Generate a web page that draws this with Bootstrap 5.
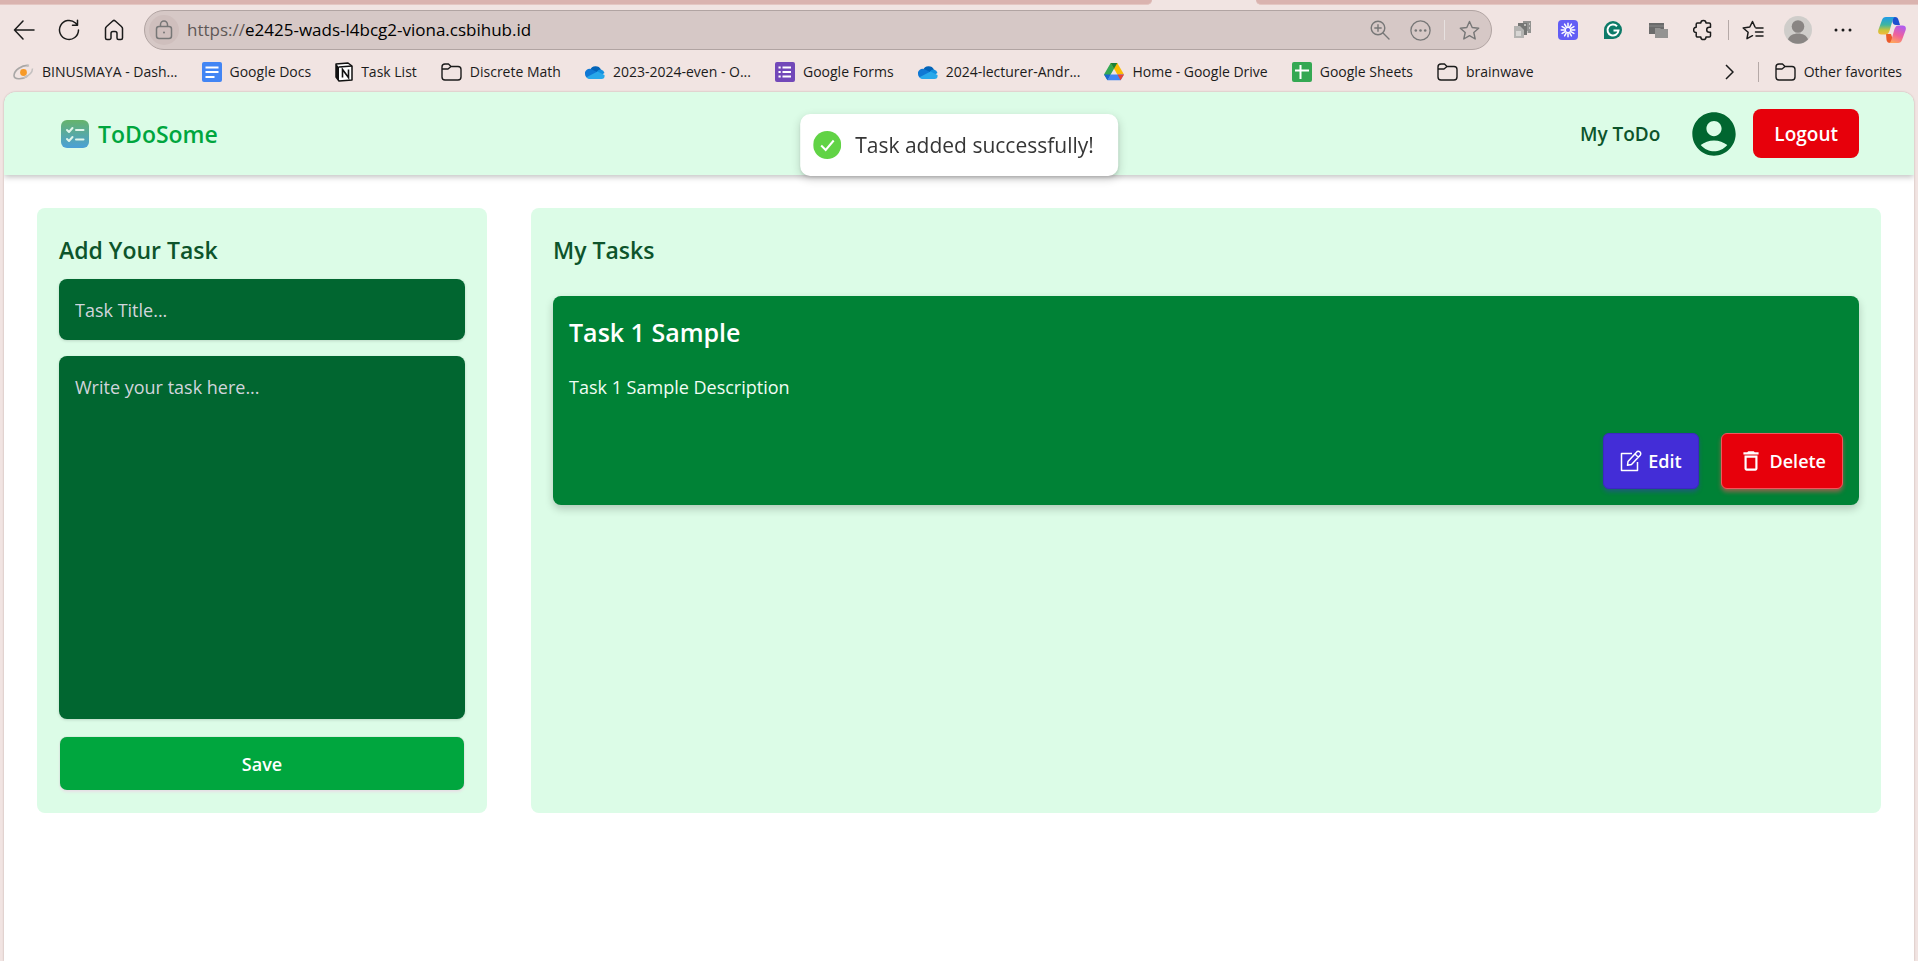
<!DOCTYPE html>
<html lang="en">
<head>
<meta charset="utf-8">
<meta name="viewport" content="width=device-width, initial-scale=1">
<title>ToDoSome</title>
<link href="https://cdn.jsdelivr.net/npm/bootstrap@5.3.0/dist/css/bootstrap.min.css" rel="stylesheet">
<style>
  body { background: #f1e4e2; font-family: "Open Sans", "Noto Sans", sans-serif; font-size: 19px; line-height: 28px; }
  svg { display: block; flex: none; }
  button { font: inherit; }

  /* browser frame */
  .tabstrip { height: 5px; }
  .tabstrip span { background: #dab3af; border-bottom: 1px solid #e4c6c2; }
  .tab-left { flex: 1152 0 0; border-bottom-right-radius: 6px; }
  .tabstrip .tab-gap { flex: 104 0 0; background: none; border: 0; }
  .tab-right { flex: 662 0 0; border-bottom-left-radius: 6px; }
  .toolbar { height: 50px; padding: 0 14px 0 12px; }
  .tool-group { gap: 21px; }
  .icon-btn { background: none; border: 0; padding: 0; color: #1b1b1b; width: 24px; height: 40px; display: flex; align-items: center; justify-content: center; flex: none; }
  .address { height: 40px; border: 1px solid #b1a4a2; border-radius: 20px; background: #d6c8c6; padding: 0 10px 0 4px; margin: 0 19px 0 18px; gap: 8px; }
  .lock { width: 30px; height: 30px; border-radius: 50%; background: #cfbfbd; color: #777; }
  .address .icon-btn { color: #777; }
  .url { font-size: 17px; line-height: 24px; color: #000; }
  .url-scheme { color: #5f5857; }
  .vline { width: 1px; height: 20px; background: #b5a9a7; flex: none; }
  .toolbar .split { margin: 0 12px 0 13px; }
  .favorites { height: 37px; padding: 0 16px 4px 12px; font-size: 14px; line-height: 20px; }
  .favorites a { color: #1b1b1b; text-decoration: none; gap: 8px; white-space: nowrap; }

  /* application */
  .page { margin: 0 4px; background: #fff; border-radius: 12px 12px 0 0; min-height: calc(100vh - 92px); box-shadow: 0 0 2px #b9a3a1; overflow: hidden; }
  .topbar { background: #dcfce7; height: 83px; padding: 0 55px 0 56px; box-shadow: 0 2px 6px rgba(0,0,0,.25); }
  .brand { color: #00a63e; font-weight: 600; font-size: 23px; line-height: 32px; text-decoration: none; gap: 8px; }
  .menu-link { color: #0d542b; font-weight: 600; font-size: 19px; text-decoration: none; }
  .avatar { margin: 0 13px 0 28px; }
  .btn-logout { background: #e7000b; color: #fff; font-weight: 600; font-size: 19px; line-height: 28px; height: 49px; padding: 0 21px; border-radius: 8px; border: 0; }
  .toast-note { position: fixed; top: 114px; left: 50%; transform: translateX(-50%); height: 62px; background: #fff; color: #363636; border-radius: 10px; padding: 0 24px 0 13px; gap: 14px; font-size: 21px; box-shadow: 0 3px 10px rgba(0,0,0,.16), 0 2px 3px rgba(0,0,0,.08); white-space: nowrap; z-index: 5; }
  .board { display: grid; grid-template-columns: minmax(0,1fr) minmax(0,3fr); gap: 44px; padding: 33px; }
  .panel { background: #dcfce7; border-radius: 8px; padding: 22px 22px 23px; }
  .panel h2 { color: #0d542b; font-weight: 600; font-size: 23px; line-height: 40px; margin: 0; }
  .field { display: block; width: 100%; background: #016630; color: #fff; border: 0; border-radius: 8px; padding: 16px; font-size: 18px; line-height: 30px; box-shadow: 0 1px 3px rgba(0,0,0,.15); resize: none; }
  .field::placeholder { color: #d1d5dc; opacity: 1; }
  .field-title { height: 61px; margin: 9px 0 16px; }
  .field-text { height: 363px; }
  .btn-save { display: block; width: calc(100% - 2px); margin: 18px 1px 0; height: 53px; background: #00a63e; color: #fff; font-weight: 600; font-size: 18px; border: 0; border-radius: 7px; box-shadow: 0 2px 3px #e8dfe6, 0 0 1px #888; }
  .task { background: #008236; color: #fff; border-radius: 8px; padding: 16px; margin-top: 26px; box-shadow: 0 4px 8px rgba(0,0,0,.2); }
  .task h3 { font-size: 25px; line-height: 40px; font-weight: 600; margin: 0; }
  .task p { margin: 21px 0 31px; color: #f0fdf4; font-size: 18px; line-height: 29px; }
  .task-actions { gap: 22px; }
  .btn-task { height: 56px; font-size: 18px; font-weight: 600; color: #fff; border-radius: 6px; gap: 6px; padding: 0 16px; }
  .btn-edit { background: #432dd7; border: 1px solid #3b28c0; box-shadow: 0 3px 4px rgba(67,45,215,.4); }
  .btn-delete { background: #e7000b; border: 1px solid #f0575d; box-shadow: 0 3px 4px rgba(231,80,90,.6); }
</style>
</head>
<body>
<svg width="0" height="0" class="position-absolute" aria-hidden="true">
  <defs>
    <symbol id="folder" viewBox="0 0 21 20"><path d="M1 5a3 3 0 0 1 3-3h3.500l2.500 2.500H17a3 3 0 0 1 3 3V15a3 3 0 0 1-3 3H4a3 3 0 0 1-3-3zM1 7h6l3-2.500" fill="none" stroke="currentColor" stroke-width="1.400" stroke-linejoin="round"/></symbol>
    <symbol id="cloud" viewBox="0 0 20 14"><path d="M5 5a6 6 0 0 1 11-.5L11 9 4 7z" fill="#0364b8"/><path d="M0 9a4.500 4.500 0 0 1 6.500-4.700L14 8l-9 5.500H4.500A4.500 4.500 0 0 1 0 9z" fill="#0f78d4"/><path d="M12 6.500a4.500 4.500 0 0 1 4-2A4.800 4.800 0 0 1 19.500 8l-5 3z" fill="#1490df"/><path d="M1.500 12.300 12.500 6.500 19.500 10a3.500 3.500 0 0 1-3 4H4.500a4 4 0 0 1-3-1.700z" fill="#28a8ea"/></symbol>
  </defs>
</svg>

<div class="tabstrip d-flex"><span class="tab-left"></span><span class="tab-gap"></span><span class="tab-right"></span></div>

<div class="toolbar d-flex align-items-center">
  <div class="tool-group d-flex align-items-center">
    <button class="icon-btn" aria-label="Back"><svg width="22" height="20" viewBox="0 0 22 20" fill="none" stroke="currentColor" stroke-width="1.500" stroke-linecap="round" stroke-linejoin="round"><path d="M21 10H1.500M10 1 1.500 10l8.500 9"/></svg></button>
    <button class="icon-btn" aria-label="Refresh"><svg width="22" height="22" viewBox="0 0 22 22" fill="none" stroke="currentColor" stroke-width="1.500" stroke-linecap="round" stroke-linejoin="round"><path d="M20.500 11a9.500 9.500 0 1 1-3-7l2 2M19.500 1.200V6.200H14.500"/></svg></button>
    <button class="icon-btn" aria-label="Home"><svg width="20" height="22" viewBox="0 0 20 22" fill="none" stroke="currentColor" stroke-width="1.500" stroke-linejoin="round"><path d="M1.500 9.500c0-.8.300-1.300.800-1.700L9 1.800c.600-.500 1.400-.5 2 0l6.700 6c.5.400.8.900.8 1.700V19a1.500 1.500 0 0 1-1.500 1.500h-2.500A1.500 1.500 0 0 1 13 19v-4.500a2 2 0 0 0-2-2H9a2 2 0 0 0-2 2V19a1.500 1.500 0 0 1-1.500 1.500H3A1.500 1.500 0 0 1 1.500 19z"/></svg></button>
  </div>
  <div class="address d-flex align-items-center flex-grow-1">
    <span class="lock d-flex align-items-center justify-content-center"><svg width="18" height="20" viewBox="0 0 18 20" fill="none" stroke="currentColor" stroke-width="1.500"><rect x="1.500" y="6.500" width="15" height="12" rx="2.500"/><path d="M5.500 6.500V4.500a3.500 3.500 0 0 1 7 0v2"/><circle cx="9" cy="12.500" r="1" fill="currentColor" stroke="none"/></svg></span>
    <span class="url flex-grow-1"><span class="url-scheme">https://</span>e2425-wads-l4bcg2-viona.csbihub.id</span>
    <button class="icon-btn" aria-label="Zoom"><svg width="20" height="20" viewBox="0 0 20 20" fill="none" stroke="currentColor" stroke-width="1.400" stroke-linecap="round"><circle cx="8" cy="8" r="6.800"/><path d="m13 13 6 6M8 4.800v6.400M4.800 8h6.400"/></svg></button>
    <button class="icon-btn ms-2" aria-label="Page options"><svg width="21" height="21" viewBox="0 0 21 21" fill="none" stroke="currentColor" stroke-width="1.300"><circle cx="10.500" cy="10.500" r="9.600"/><g fill="currentColor" stroke="none"><circle cx="5.800" cy="10.500" r="1.300"/><circle cx="10.500" cy="10.500" r="1.300"/><circle cx="15.200" cy="10.500" r="1.300"/></g></svg></button>
    <span class="vline bg-light opacity-50 mx-1"></span>
    <button class="icon-btn" aria-label="Add to favorites"><svg width="21" height="21" viewBox="0 0 21 21" fill="none" stroke="currentColor" stroke-width="1.400" stroke-linejoin="round"><path d="m10.500 1.500 2.700 6 6.500.7-4.900 4.300 1.400 6.500-5.700-3.300L4.800 19l1.400-6.500L1.300 8.200l6.500-.7z"/></svg></button>
  </div>
  <div class="tool-group d-flex align-items-center">
    <button class="icon-btn" aria-label="Copy extension"><svg width="20" height="20" viewBox="0 0 20 20"><path d="M10 1h8v12h-8z" fill="#929290"/><path d="M5 3h9v12H5z" fill="#757674"/><path d="M1 6h6l4 4v8H1z" fill="#b4b3b1"/><path d="M3 11h5v5H3z" fill="#d8d6d4"/><path d="M11 5h2M16 4h1M16 8h1M14 12h1" stroke="#d8d6d4" stroke-width="1.500"/></svg></button>
    <button class="icon-btn" aria-label="Loom"><svg width="20" height="20" viewBox="0 0 20 20"><rect width="20" height="20" rx="4" fill="#625df5"/><g stroke="#fff" stroke-width="1.500" stroke-linecap="round"><path d="M10 3.200v13.600M3.200 10h13.600M6.600 4.100l6.800 11.800M13.400 4.100 6.600 15.900M4.100 6.600l11.800 6.800M4.100 13.400l11.800-6.800"/></g><circle cx="10" cy="10" r="2.600" fill="#625df5" stroke="#fff"/></svg></button>
    <button class="icon-btn" aria-label="Grammarly"><svg width="20" height="20" viewBox="0 0 20 20"><path d="M10 1a9 9 0 0 1 0 18H1v-9a9 9 0 0 1 9-9z" fill="#0d7a68"/><path d="M14 6.200A5.500 5.500 0 1 0 15.500 10.500H10.500" fill="none" stroke="#fff" stroke-width="2"/></svg></button>
    <button class="icon-btn" aria-label="Screens"><svg width="20" height="20" viewBox="0 0 20 20"><rect x="1" y="3" width="15" height="11" fill="#6b6b6b"/><path d="M1 6h15" stroke="#8b8b8b"/><path d="M7 8h5l1 1h7v9H7z" fill="#949392"/></svg></button>
    <button class="icon-btn" aria-label="Extensions"><svg width="20" height="22" viewBox="0 0 20 22" fill="none" stroke="currentColor" stroke-width="1.500" stroke-linejoin="round"><path d="M4.500 4h3.300a2.600 2.600 0 0 1 5.200 0h3.200c.7 0 1.300.6 1.300 1.300v3h-1.300a2.500 2.500 0 0 0 0 5h1.300v3.400c0 .7-.6 1.300-1.300 1.300H13a2.600 2.600 0 0 1-5.200 0H4.500c-.7 0-1.300-.6-1.300-1.300v-3.200a2.600 2.600 0 0 1 0-5.200v-3c0-.7.600-1.300 1.300-1.300z"/></svg></button>
  </div>
  <span class="vline split"></span>
  <div class="tool-group d-flex align-items-center">
    <button class="icon-btn" aria-label="Favorites"><svg width="22" height="20" viewBox="0 0 22 20" fill="none" stroke="currentColor" stroke-width="1.500" stroke-linejoin="round" stroke-linecap="round"><path d="M13 7l-2.500-5.500L7.800 7 1.200 8l4.900 4.300L5 18.700l5.500-3M14 8h7M13.500 12H21M14 16h7"/></svg></button>
    <button class="icon-btn" aria-label="Profile"><svg width="28" height="28" viewBox="0 0 28 28"><circle cx="14" cy="14" r="14" fill="#cfcdca"/><circle cx="14" cy="10.500" r="6.300" fill="#898583"/><path d="M4 23.500c2-8 18-8 20 0a14 14 0 0 1-20 0z" fill="#898583"/></svg></button>
    <button class="icon-btn" aria-label="Settings"><svg width="18" height="4" viewBox="0 0 18 4" fill="currentColor"><circle cx="2" cy="2" r="1.500"/><circle cx="9" cy="2" r="1.500"/><circle cx="16" cy="2" r="1.500"/></svg></button>
    <button class="icon-btn ms-1" aria-label="Copilot"><svg width="28" height="26" viewBox="0 0 28 26"><defs><linearGradient id="cp1" x1="0" y1="0" x2="0" y2="1"><stop offset="0" stop-color="#1f9be8"/><stop offset=".45" stop-color="#3fb6a0"/><stop offset=".75" stop-color="#c9c43a"/><stop offset="1" stop-color="#f2b93b"/></linearGradient><linearGradient id="cp2" x1=".7" y1="0" x2=".3" y2="1"><stop offset="0" stop-color="#b05cf0"/><stop offset=".55" stop-color="#f0619a"/><stop offset="1" stop-color="#ffa45c"/></linearGradient></defs><path d="M14 0h3c2 0 3 1 3.500 3l1.500 5h-4c-2 0-3-1-3.500-3z" fill="#1d50cf"/><path d="M8 17h5l3 9h-4c-2 0-3-1-3.500-3z" fill="#ea5a2a"/><path d="M8 0h9c-1.500.5-2 2-2.500 3.500L11.500 14c-1 2.500-2 3.500-4 3.500H3.500c-3 0-4-2-3-5L4 3c.7-2 1.800-3 4-3z" fill="url(#cp1)"/><path d="M20 26h-9c1.500-.5 2-2 2.500-3.500L16.500 12c1-2.500 2-3.500 4-3.500h4c3 0 4 2 3 5L24 23c-.7 2-1.800 3-4 3z" fill="url(#cp2)"/></svg></button>
  </div>
</div>

<nav class="favorites d-flex align-items-center" aria-label="Favorites bar">
  <div class="d-flex align-items-center flex-grow-1 gap-4">
    <a href="#" class="d-flex align-items-center"><svg width="22" height="20" viewBox="0 0 22 20" fill="none"><path d="M17 3.500C10 2.500 2 8.500 2 13.500c0 4 8 4.500 13.500.5" stroke="#a9a7a6" stroke-width="1.600"/><path d="M20.500 6.500c0 4-4 7.500-9 9.500M17 3.500l-2.500 1" stroke="#c4c1c0" stroke-width="1.500"/><circle cx="11.500" cy="10.500" r="3.400" fill="#f79a28"/></svg>BINUSMAYA - Dash...</a>
    <a href="#" class="d-flex align-items-center"><svg width="20" height="20" viewBox="0 0 20 20"><rect width="20" height="20" rx="2" fill="#4285f4"/><path d="M3.500 5.500h13M3.500 10h13M3.500 15h9" stroke="#fff" stroke-width="2"/></svg>Google Docs</a>
    <a href="#" class="d-flex align-items-center"><svg width="18" height="20" viewBox="0 0 18 20"><path d="M1 2 13 1l4 3v14l-13 1-3-4z" fill="#fff" stroke="#111" stroke-width="1.500" stroke-linejoin="round"/><path d="M1 2l3 3v14l-3-4z" fill="#111"/><path d="M4 5l13-1" stroke="#111" stroke-width="1.500"/><path d="M7.500 15.500v-8l6 8v-8" fill="none" stroke="#111" stroke-width="1.600"/></svg>Task List</a>
    <a href="#" class="d-flex align-items-center"><svg width="21" height="20"><use href="#folder"/></svg>Discrete Math</a>
    <a href="#" class="d-flex align-items-center"><svg width="20" height="14"><use href="#cloud"/></svg>2023-2024-even - O...</a>
    <a href="#" class="d-flex align-items-center"><svg width="20" height="20" viewBox="0 0 20 20"><rect width="20" height="20" rx="2" fill="#7248b9"/><path d="M7.500 5.500H16M7.500 10H16M7.500 14.500H16M3.500 5.500h2.200M3.500 10h2.200M3.500 14.500h2.200" stroke="#fff" stroke-width="2"/></svg>Google Forms</a>
    <a href="#" class="d-flex align-items-center"><svg width="20" height="14"><use href="#cloud"/></svg>2024-lecturer-Andr...</a>
    <a href="#" class="d-flex align-items-center"><svg width="20" height="18" viewBox="0 0 20 18"><path d="M6.700 0h6.600l-3.300 5.700L3.500 17 0 11.500z" fill="#34a853"/><path d="M6.700 0h6.600L20 11.500h-6.600z" fill="#fbbc04"/><path d="M6.700 0h6.600L10 5.700z" fill="#188038"/><path d="M3.400 17.300 6.700 11.500H20l-3.400 5.800z" fill="#4285f4"/><path d="M0 11.500h6.700l-3.300 5.800z" fill="#1967d2"/><path d="M13.400 11.500H20l-3.400 5.800z" fill="#ea4335"/></svg>Home - Google Drive</a>
    <a href="#" class="d-flex align-items-center"><svg width="20" height="20" viewBox="0 0 20 20"><rect width="20" height="20" rx="2" fill="#34a853"/><path d="M8.500 3v14M3 8.500h14" stroke="#fff" stroke-width="2"/></svg>Google Sheets</a>
    <a href="#" class="d-flex align-items-center"><svg width="21" height="20"><use href="#folder"/></svg>brainwave</a>
  </div>
  <button class="icon-btn" aria-label="More favorites"><svg width="9" height="16" viewBox="0 0 9 16" fill="none" stroke="currentColor" stroke-width="1.500"><path d="m1 1 7 7-7 7"/></svg></button>
  <span class="vline mx-3"></span>
  <a href="#" class="d-flex align-items-center"><svg width="21" height="20"><use href="#folder"/></svg>Other favorites</a>
</nav>

<div class="page">
  <header class="topbar d-flex align-items-center justify-content-between">
    <a href="#" class="brand d-flex align-items-center"><svg width="30" height="30" viewBox="0 0 30 30"><defs><linearGradient id="lg" x1="0" y1="0" x2="0" y2="1"><stop offset="0" stop-color="#66b36b"/><stop offset="1" stop-color="#4aa0d8"/></linearGradient></defs><rect x="1" y="1" width="28" height="28" rx="6" fill="url(#lg)"/><path d="m7 11 2 2 3.500-4M7 20l2 2 3.500-4M16 11h7.500M16 20.500h7.500" fill="none" stroke="#dff5ea" stroke-width="2" stroke-linecap="round" stroke-linejoin="round"/></svg>ToDoSome</a>
    <div class="d-flex align-items-center">
      <a href="#" class="menu-link">My ToDo</a>
      <svg class="avatar" width="52" height="52" viewBox="0 0 24 24" fill="#016630"><path d="M12 2C6.480 2 2 6.480 2 12s4.480 10 10 10 10-4.480 10-10S17.520 2 12 2zm0 4c1.930 0 3.500 1.570 3.500 3.500S13.930 13 12 13s-3.500-1.570-3.500-3.500S10.070 6 12 6zm0 14c-2.030 0-4.430-.82-6.140-2.880C7.550 15.800 9.680 15 12 15s4.450.8 6.140 2.120C16.430 19.180 14.030 20 12 20z"/></svg>
      <button class="btn-logout">Logout</button>
    </div>
  </header>

  <main class="board">
    <form class="panel">
      <h2>Add Your Task</h2>
      <input type="text" class="field field-title" aria-label="Task title" placeholder="Task Title...">
      <textarea class="field field-text" aria-label="Task description" placeholder="Write your task here..."></textarea>
      <button type="button" class="btn-save">Save</button>
    </form>
    <section class="panel">
      <h2>My Tasks</h2>
      <article class="task">
        <h3>Task 1 Sample</h3>
        <p>Task 1 Sample Description</p>
        <div class="task-actions d-flex justify-content-end">
          <button class="btn-task btn-edit d-flex align-items-center"><svg width="22" height="22" viewBox="0 0 22 22" fill="none" stroke="#fff" stroke-width="1.500" stroke-linejoin="round"><path d="M12 3.500H1.500V20.500h16V12"/><path d="m8 11.500 8.500-9.300a2.300 2.300 0 0 1 3.700 3l-8.700 9.300-4 .8zM15 4l3.300 3.200"/></svg>Edit</button>
          <button class="btn-task btn-delete d-flex align-items-center"><svg width="26" height="26" viewBox="0 0 24 24" fill="#fff"><path d="M16 9v10H8V9h8m-1.500-6h-5l-1 1H5v2h14V4h-3.500l-1-1zM18 7H6v12c0 1.100.9 2 2 2h8c1.100 0 2-.9 2-2V7z"/></svg>Delete</button>
        </div>
      </article>
    </section>
  </main>
</div>

<div class="toast-note d-flex align-items-center" role="status"><svg width="28" height="28" viewBox="0 0 28 28"><circle cx="14" cy="14" r="14" fill="#61d345"/><path d="m8 14.500 4.500 4.500 8-9.500" fill="none" stroke="#fff" stroke-width="2"/></svg>Task added successfully!</div>
<script src="https://cdn.jsdelivr.net/npm/bootstrap@5.3.0/dist/js/bootstrap.bundle.min.js"></script>
</body>
</html>
